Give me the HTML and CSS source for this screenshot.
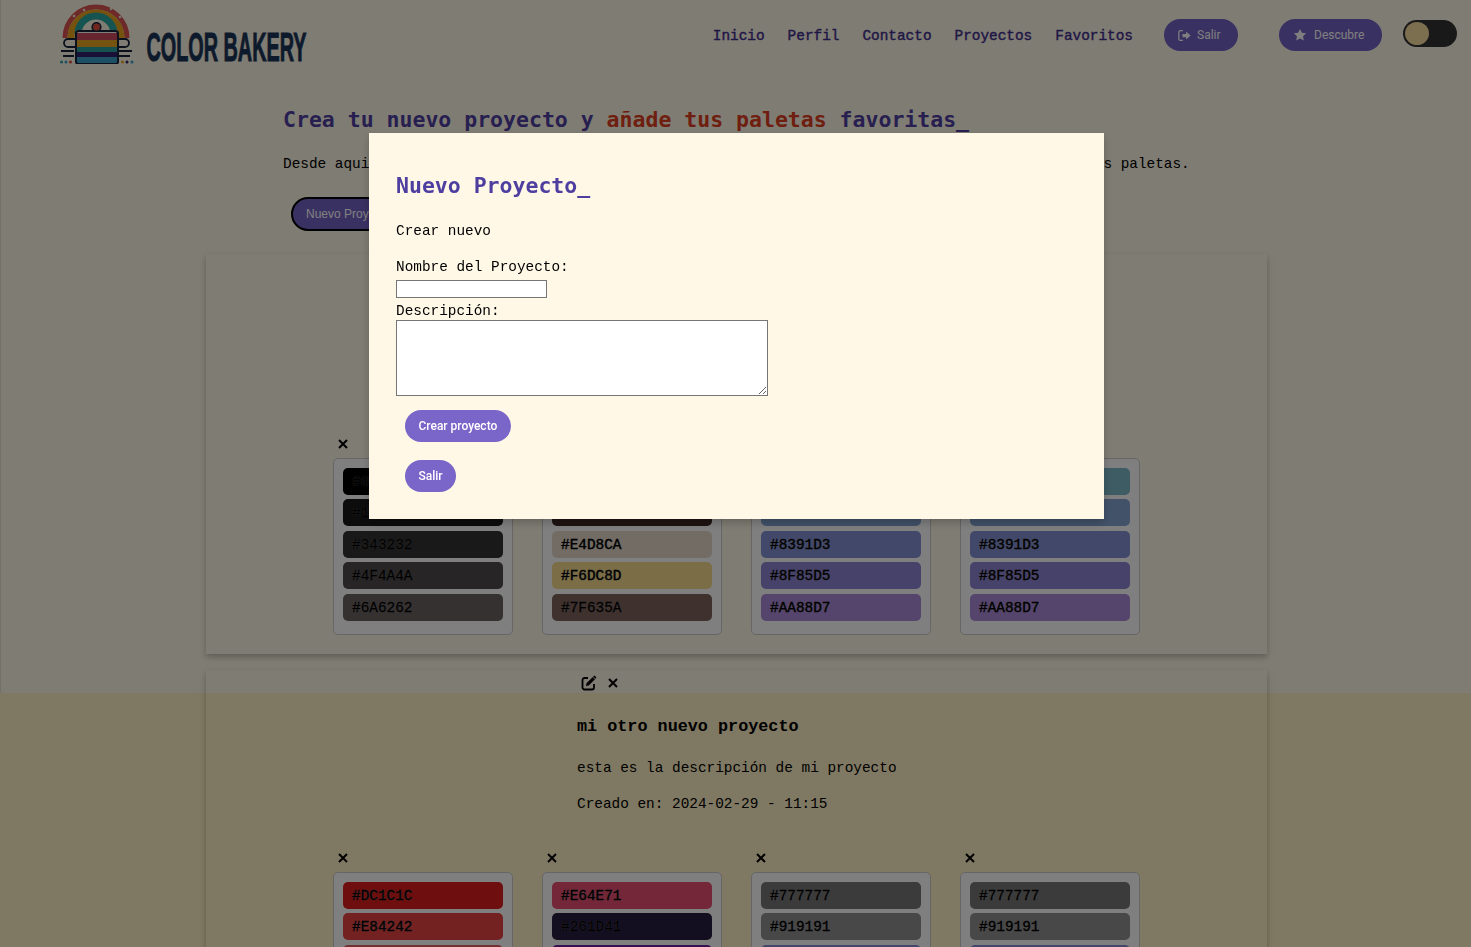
FILE: index.html
```html
<!DOCTYPE html>
<html lang="es">
<head>
<meta charset="utf-8">
<title>Color Bakery</title>
<link rel="stylesheet" href="styles.css">
</head>
<body>
<svg class="defs" width="0" height="0">
  <symbol id="x" viewBox="0 0 10 10"><path d="M1 1 9 9M9 1 1 9" fill="none" stroke="#000" stroke-width="2"/></symbol>
  <symbol id="pen" viewBox="0 0 16 16"><path fill="none" stroke="#000" stroke-width="1.800" d="M13 9v3.500a2 2 0 0 1-2 2H3.500a2 2 0 0 1-2-2V5a2 2 0 0 1 2-2H7"/><path d="M5.500 8.300 11.800 2l2.200 2.200-6.300 6.300-2.700.5zM12.700 1.100c.5-.5 1-.5 1.400-.1l.9.900c.4.400.4.900-.1 1.400l-.5.500-2.200-2.200z"/></symbol>
</svg>
<div class="page">
  <header class="header">
    <a class="logo">
      <svg class="logo-mark" viewBox="0 0 78 62" width="78" height="62">
        <g fill="none">
          <path d="M7 36A31 31 0 0 1 69 36" stroke="#dd5550" stroke-width="5"/>
          <path d="M13 36A25 25 0 0 1 63 36" stroke="#eda51f" stroke-width="7"/>
          <path d="M20 32A18 18 0 0 1 56 32" stroke="#2ba8a2" stroke-width="7"/>
          <circle cx="16" cy="14" r="1.300" fill="#f3ede0"/><circle cx="26" cy="8" r="1.300" fill="#f3ede0"/><circle cx="53" cy="7" r="1.300" fill="#f3ede0"/><circle cx="62" cy="15" r="1.300" fill="#f3ede0"/>
          <path d="M17 37H10a3.500 3.500 0 0 0 0 8h7M60 37h7a3.500 3.500 0 0 1 0 8h-7" stroke="#16243a" stroke-width="1.800"/>
          <path d="M3 49H16M5 54H16M61 49H74M61 54H72" stroke="#16243a" stroke-width="2"/>
        </g>
        <rect x="18" y="28" width="42" height="33" rx="2" fill="#fff"/>
        <rect x="18.500" y="31" width="41" height="7" fill="#cf4a60"/>
        <rect x="18.500" y="38" width="41" height="7" fill="#e9a821"/>
        <rect x="18.500" y="45" width="41" height="5" fill="#2aa59e"/>
        <rect x="18.500" y="50" width="41" height="5" fill="#35216f"/>
        <rect x="18.500" y="55" width="41" height="6" fill="#3aa0c8"/>
        <rect x="18" y="29" width="42" height="33" rx="2.500" fill="none" stroke="#16243a" stroke-width="2"/>
        <circle cx="38.500" cy="25" r="4.300" fill="#df4d3f" stroke="#16243a" stroke-width="1.600"/>
        <circle cx="3.500" cy="60" r="1.500" fill="#2aa59e"/><circle cx="8" cy="60" r="1.500" fill="#3aa0c8"/><circle cx="12.500" cy="60" r="1.500" fill="#df4d3f"/>
        <circle cx="64.500" cy="60" r="1.500" fill="#eda51f"/><circle cx="69" cy="60" r="1.500" fill="#35216f"/><circle cx="74" cy="60" r="1.500" fill="#3aa0c8"/>
      </svg>
      <svg class="logo-word" viewBox="0 0 240 56" width="240" height="56"><text x="0.500" y="51" textLength="160" lengthAdjust="spacingAndGlyphs">COLOR BAKERY</text></svg>
    </a>
    <nav class="nav">
      <a class="nav-link">Inicio</a>
      <a class="nav-link">Perfil</a>
      <a class="nav-link">Contacto</a>
      <a class="nav-link">Proyectos</a>
      <a class="nav-link">Favoritos</a>
    </nav>
    <a class="pill pill-exit">
      <svg class="pill-icon" viewBox="0 0 16 16" width="13" height="13"><path fill="none" stroke="currentColor" stroke-width="1.500" d="M6 2H3a2 2 0 0 0-2 2v8a2 2 0 0 0 2 2h3"/><path fill="currentColor" d="M5.500 6H10V3l5.500 5-5.500 5v-3H5.500z"/></svg>
      <span>Salir</span>
    </a>
    <a class="pill pill-discover">
      <svg class="pill-icon" viewBox="0 0 24 24" width="14" height="14"><path fill="currentColor" d="M12 1.500l3.200 6.700 7.300 1-5.300 5.100 1.300 7.300-6.500-3.500-6.500 3.500 1.300-7.300L1.500 9.200l7.300-1z"/></svg>
      <span>Descubre</span>
    </a>
    <span class="toggle"><span class="toggle-knob"></span></span>
  </header>

  <section class="intro">
    <h1 class="intro-title">Crea tu nuevo proyecto y <span class="accent">añade tus paletas</span> favoritas_</h1>
    <p class="intro-text">Desde aqui podrás crear tus nuevos proyectos, darles su nombre, describirlos e incluir todas tus paletas.</p>
    <button class="new-btn">Nuevo Proyecto</button>
  </section>

  <main class="projects">
    <article class="project project-first">
      <div class="project-info">
        <div class="project-actions"><svg class="edit" width="16" height="16"><use href="#pen"/></svg><svg class="close" width="10" height="10"><use href="#x"/></svg></div>
        <h3 class="project-name">mi nuevo proyecto</h3>
        <p class="project-text">esta es la descripción de mi proyecto</p>
        <p class="project-text">Creado en: 2024-02-29 - 11:10</p>
      </div>
      <div class="palettes">
        <div class="palette-col"><svg class="close" width="10" height="10"><use href="#x"/></svg><div class="palette">
          <div class="swatch swatch-0">#000000</div><div class="swatch swatch-1">#1A1919</div><div class="swatch swatch-2">#343232</div><div class="swatch swatch-3">#4F4A4A</div><div class="swatch swatch-4">#6A6262</div>
        </div></div>
        <div class="palette-col"><svg class="close" width="10" height="10"><use href="#x"/></svg><div class="palette">
          <div class="swatch swatch-5">#E4D8CA</div><div class="swatch swatch-6">#3C2824</div><div class="swatch swatch-5">#E4D8CA</div><div class="swatch swatch-7">#F6DC8D</div><div class="swatch swatch-8">#7F635A</div>
        </div></div>
        <div class="palette-col"><svg class="close" width="10" height="10"><use href="#x"/></svg><div class="palette">
          <div class="swatch swatch-9">#7CB8C8</div><div class="swatch swatch-10">#84A4D2</div><div class="swatch swatch-11">#8391D3</div><div class="swatch swatch-12">#8F85D5</div><div class="swatch swatch-13">#AA88D7</div>
        </div></div>
        <div class="palette-col"><svg class="close" width="10" height="10"><use href="#x"/></svg><div class="palette">
          <div class="swatch swatch-9">#7CB8C8</div><div class="swatch swatch-10">#84A4D2</div><div class="swatch swatch-11">#8391D3</div><div class="swatch swatch-12">#8F85D5</div><div class="swatch swatch-13">#AA88D7</div>
        </div></div>
      </div>
    </article>

    <article class="project">
      <div class="project-info">
        <div class="project-actions"><svg class="edit" width="16" height="16"><use href="#pen"/></svg><svg class="close" width="10" height="10"><use href="#x"/></svg></div>
        <h3 class="project-name">mi otro nuevo proyecto</h3>
        <p class="project-text">esta es la descripción de mi proyecto</p>
        <p class="project-text">Creado en: 2024-02-29 - 11:15</p>
      </div>
      <div class="palettes">
        <div class="palette-col"><svg class="close" width="10" height="10"><use href="#x"/></svg><div class="palette">
          <div class="swatch swatch-14">#DC1C1C</div><div class="swatch swatch-15">#E84242</div><div class="swatch swatch-16"></div>
        </div></div>
        <div class="palette-col"><svg class="close" width="10" height="10"><use href="#x"/></svg><div class="palette">
          <div class="swatch swatch-17">#E64E71</div><div class="swatch swatch-18">#261D41</div><div class="swatch swatch-19"></div>
        </div></div>
        <div class="palette-col"><svg class="close" width="10" height="10"><use href="#x"/></svg><div class="palette">
          <div class="swatch swatch-20">#777777</div><div class="swatch swatch-21">#919191</div><div class="swatch swatch-11"></div>
        </div></div>
        <div class="palette-col"><svg class="close" width="10" height="10"><use href="#x"/></svg><div class="palette">
          <div class="swatch swatch-20">#777777</div><div class="swatch swatch-21">#919191</div><div class="swatch swatch-11"></div>
        </div></div>
      </div>
    </article>
  </main>
</div>

<div class="overlay"></div>

<div class="modal">
  <h2 class="modal-title">Nuevo Proyecto_</h2>
  <p class="modal-sub">Crear nuevo</p>
  <form class="modal-form">
    <label class="modal-label">Nombre del Proyecto:</label>
    <input class="modal-input" type="text">
    <label class="modal-label">Descripción:</label>
    <textarea class="modal-area"></textarea>
    <button class="modal-btn" type="button">Crear proyecto</button>
    <button class="modal-btn" type="button">Salir</button>
  </form>
</div>
</body>
</html>
```

FILE: styles.css
```css
* { box-sizing: border-box; }
html { background: #fff0c4; height: 100%; overflow: hidden; }
body {
  margin: 0;
  height: 100%;
  overflow: hidden;
  font-family: "Liberation Mono", monospace;
  font-size: 14.4px;
  color: #000;
}
.defs { display: block; height: 0; }
.page {
  height: 693px;
  background: #fff8e7;
  border-left: 1px solid #e6e0d2;
}

/* header */
.header {
  display: flex;
  align-items: center;
  height: 70px;
  padding: 0 14px 0 57px;
}
.logo { display: flex; align-items: center; height: 70px; }
.logo-mark { margin-top: -5px; }
.logo-word { margin: 6px 0 0 10px; flex: none; }
.logo-word text {
  font-family: "Liberation Sans Narrow", "Liberation Sans", sans-serif;
  font-weight: 700;
  font-size: 40px;
  fill: #1b3557;
  stroke: #1b3557;
  stroke-width: 1px;
}
.nav { display: flex; gap: 23px; margin: 2px 0 0 auto; }
.nav-link { color: #3f2f8c; font-size: 14.4px; -webkit-text-stroke: .4px #3f2f8c; }
.pill {
  display: flex;
  align-items: center;
  height: 32px;
  border-radius: 16px;
  background: #7562c6;
  color: #fff;
  font-family: Roboto, sans-serif;
  font-size: 12px;
}
.pill-exit { gap: 6px; width: 74px; padding-left: 14px; margin-left: 31px; }
.pill-discover { gap: 7px; width: 103px; padding-left: 14px; margin-left: 41px; }
.toggle {
  display: block;
  width: 54px;
  height: 27px;
  margin: -3px 0 0 21px;
  padding: 2px;
  border-radius: 14px;
  background: #333;
}
.toggle-knob { display: block; width: 24px; height: 23px; border-radius: 50%; background: #f8dfa0; }

/* intro */
.intro { padding: 37px 0 0 282px; }
.intro-title, .modal-title {
  margin: 0;
  font-family: "DejaVu Sans Mono", monospace;
  font-size: 21.5px;
  line-height: 25px;
  font-weight: 700;
  color: #4e3ea0;
}
.accent { color: #dd3e20; }
.intro-text { margin: 24px 0 0; line-height: 16px; }
.new-btn {
  display: block;
  margin: 25px 0 0 8px;
  height: 34px;
  width: 128px;
  padding: 0 0 0 13px;
  border: 2px solid #000;
  border-radius: 17px;
  background: #7562c6;
  color: #fff;
  font-family: "Liberation Sans", sans-serif;
  font-size: 12px;
  text-align: left;
}

/* projects */
.projects { width: 1061px; margin: 23px 0 0 205px; display: flex; flex-direction: column; gap: 16px; }
.project {
  padding: 5px 127px 19px;
  box-shadow: 0 3px 6px rgba(0, 0, 0, .25);
}
.project-first { padding-top: 7px; }
.project-info { padding-left: 244px; }
.project-actions { display: flex; align-items: center; gap: 11px; height: 16px; padding-left: 4px; }
.edit, .close { flex: none; display: block; }
.project-name { margin: 26px 0 0; font-size: 16.8px; line-height: 19px; font-weight: 700; }
.project-text { margin: 26px 0 0; line-height: 12px; }
.project-text + .project-text { margin-top: 24px; }
.palettes { display: flex; gap: 29px; margin-top: 40px; }
.palette-col { display: flex; flex-direction: column; width: 180px; }
.palette-col .close { margin: 3px 0 9px 5px; }
.palette {
  display: flex;
  flex-direction: column;
  gap: 4.4px;
  padding: 9px 9px 13.4px;
  background: #fff;
  border: 1px solid #ccc;
  border-radius: 5px;
}
.swatch {
  height: 27px;
  line-height: 29px;
  padding-left: 9px;
  border-radius: 5px;
  text-shadow: 0 0 1px #888;
  -webkit-text-stroke: .3px #000;
}
.swatch-0 { background: #000; }
.swatch-1 { background: #1a1919; }
.swatch-2 { background: #343232; }
.swatch-3 { background: #4f4a4a; }
.swatch-4 { background: #6a6262; }
.swatch-5 { background: #e4d8ca; }
.swatch-6 { background: #3c2824; }
.swatch-7 { background: #f6dc8d; }
.swatch-8 { background: #7f635a; }
.swatch-9 { background: #7cb8c8; }
.swatch-10 { background: #84a4d2; }
.swatch-11 { background: #8391d3; }
.swatch-12 { background: #8f85d5; }
.swatch-13 { background: #aa88d7; }
.swatch-14 { background: #dc1c1c; }
.swatch-15 { background: #e84242; }
.swatch-16 { background: #e86060; }
.swatch-17 { background: #e64e71; }
.swatch-18 { background: #261d41; }
.swatch-19 { background: #6a1fa0; }
.swatch-20 { background: #777; }
.swatch-21 { background: #919191; }

/* overlay and modal */
.overlay { position: fixed; inset: 0; background: rgba(0, 0, 0, .5); }
.modal {
  position: fixed;
  top: 133px;
  left: 369px;
  width: 735px;
  height: 386px;
  padding: 40px 27px 0;
  background: #fff8e7;
  box-shadow: 0 4px 8px rgba(0, 0, 0, .2);
}
.modal-sub { margin: 25px 0 0; line-height: 16px; }
.modal-form { display: flex; flex-direction: column; align-items: flex-start; margin-top: 20px; }
.modal-label { line-height: 16px; }
.modal-input { width: 151px; height: 18px; margin: 5px 0 5px; border: 1px solid #767676; background: #fff; padding: 0 2px; }
.modal-area { width: 372px; height: 76px; margin: 1px 0 0; border: 1px solid #767676; background: #fff; padding: 2px; }
.modal-btn {
  height: 32px;
  margin: 14px 0 4px 9px;
  padding: 0 13.500px;
  border: 0;
  border-radius: 16px;
  background: #7a65c8;
  color: #fff;
  font-family: Roboto, sans-serif;
  font-size: 12px;
  font-weight: 500;
}
```
